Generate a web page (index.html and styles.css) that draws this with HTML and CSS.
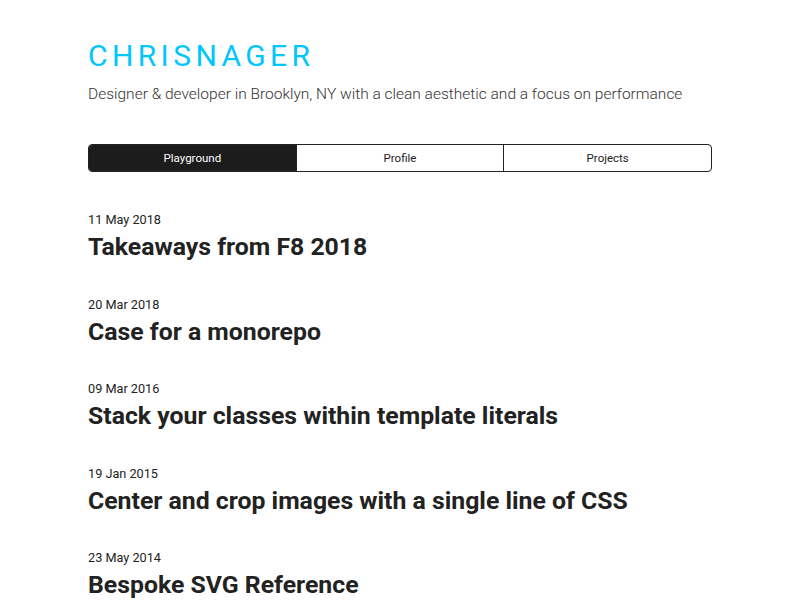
FILE: index.html
```html
<!DOCTYPE html>
<html>
<head>
<meta charset="utf-8">
<link rel="stylesheet" href="styles.css">
</head>
<body>
<div class="page">
  <header class="header">
    <h1 class="logo">CHRISNAGER</h1>
    <p class="tagline">Designer &amp; developer in Brooklyn, NY with a clean aesthetic and a focus on performance</p>
  </header>
  <nav class="tabs">
    <a class="tab active">Playground</a>
    <a class="tab">Profile</a>
    <a class="tab">Projects</a>
  </nav>
  <ul class="posts">
    <li class="post"><div class="date">11 May 2018</div><h2 class="title">Takeaways from F8 2018</h2></li>
    <li class="post"><div class="date">20 Mar 2018</div><h2 class="title">Case for a monorepo</h2></li>
    <li class="post"><div class="date">09 Mar 2016</div><h2 class="title">Stack your classes within template literals</h2></li>
    <li class="post"><div class="date">19 Jan 2015</div><h2 class="title">Center and crop images with a single line of CSS</h2></li>
    <li class="post"><div class="date">23 May 2014</div><h2 class="title">Bespoke SVG Reference</h2></li>
  </ul>
</div>
</body>
</html>
```
FILE: styles.css
```css
* { box-sizing: border-box; }
html, body { margin: 0; padding: 0; background: #fff; }
body { font-family: Roboto, "Noto Sans", sans-serif; color: #222; }
.page { width: 624px; margin-left: 88px; padding-top: 38px; }
.logo {
  margin: 0;
  font-size: 30px;
  font-weight: 400;
  letter-spacing: 4.4px;
  color: #00c6ff;
  line-height: 36px;
}
.tagline {
  margin: 10px 0 0;
  font-size: 15.5px;
  font-weight: 300;
  color: #333;
  line-height: 20px;
}
.tabs {
  display: flex;
  margin-top: 40px;
  height: 28px;
  border: 1px solid #222;
  border-radius: 4px;
  overflow: hidden;
}
.tab {
  flex: 1;
  display: flex;
  align-items: center;
  justify-content: center;
  font-size: 11.5px;
  color: #222;
  border-left: 1px solid #222;
}
.tab:first-child { border-left: none; }
.tab.active {
  background-color: #1c1c1c;
  background-image: radial-gradient(circle, #333 0.6px, transparent 0.7px);
  background-size: 4px 4px;
  color: #fff;
}
.posts { list-style: none; margin: 39px 0 0; padding: 0; }
.post { margin-bottom: 32.5px; }
.date { font-size: 12.7px; line-height: 18px; color: #222; }
.title {
  margin: 2px 0 0;
  font-size: 24.8px;
  font-weight: 700;
  line-height: 32px;
  color: #222;
}
```
